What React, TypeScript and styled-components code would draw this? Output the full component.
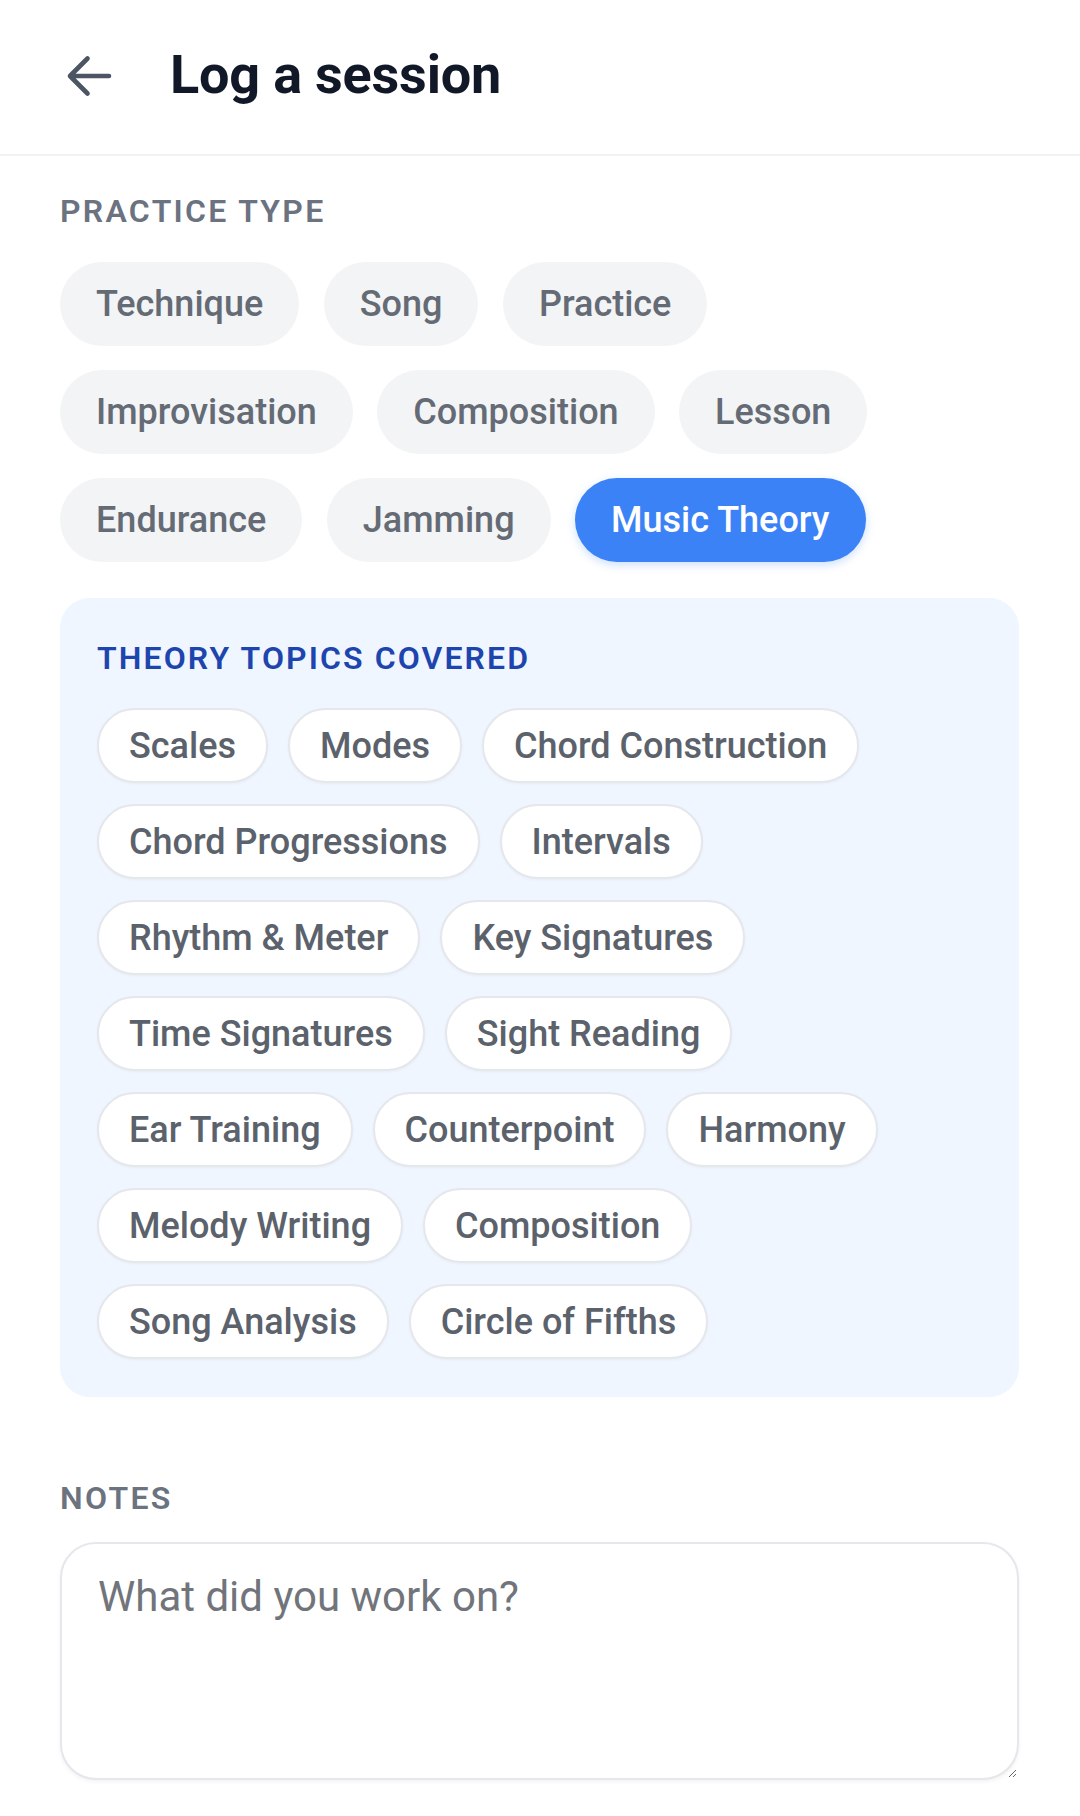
import React from "react"
import styled, { createGlobalStyle } from "styled-components"

const practiceTypes = [
  "Technique",
  "Song",
  "Practice",
  "Improvisation",
  "Composition",
  "Lesson",
  "Endurance",
  "Jamming",
  "Music Theory",
]

const theoryTopics = [
  "Scales",
  "Modes",
  "Chord Construction",
  "Chord Progressions",
  "Intervals",
  "Rhythm & Meter",
  "Key Signatures",
  "Time Signatures",
  "Sight Reading",
  "Ear Training",
  "Counterpoint",
  "Harmony",
  "Melody Writing",
  "Composition",
  "Song Analysis",
  "Circle of Fifths",
]

const GlobalStyle = createGlobalStyle`
  body {
    margin: 0;
    background: #ffffff;
    font-family: Roboto, "Noto Sans", "Liberation Sans", sans-serif;
  }
  * {
    box-sizing: border-box;
  }
`

const App: React.FC = () => {
  return (
    <PageStyled>
      <GlobalStyle />
      <Header>
        <BackButton aria-label="Back">
          <svg width="46" height="44" viewBox="0 0 46 44" fill="none">
            <path
              d="M43 22H4M21.5 4.5L4 22L21.5 39.5"
              stroke="#4b5563"
              strokeWidth="4.6"
              strokeLinecap="round"
              strokeLinejoin="round"
            />
          </svg>
        </BackButton>
        <Title>Log a session</Title>
      </Header>

      <Content>
        <SectionLabel>Practice type</SectionLabel>
        <TypeList>
          {practiceTypes.map(type => (
            <TypeChip key={type} $active={type === "Music Theory"}>
              {type}
            </TypeChip>
          ))}
        </TypeList>

        <TheoryPanel>
          <PanelTitle>Theory topics covered</PanelTitle>
          <TopicList>
            {theoryTopics.map(topic => (
              <TopicChip key={topic}>{topic}</TopicChip>
            ))}
          </TopicList>
        </TheoryPanel>

        <NotesLabel>Notes</NotesLabel>
        <NotesInput placeholder="What did you work on?" />
      </Content>
    </PageStyled>
  )
}

export default App

const PageStyled = styled.div`
  width: 1080px;
  min-height: 1816px;
  background: #ffffff;
`

const Header = styled.header`
  height: 156px;
  display: flex;
  align-items: center;
  padding-left: 66px;
  padding-bottom: 5px;
  border-bottom: 2px solid #f1f2f4;
`

const BackButton = styled.button`
  display: flex;
  align-items: center;
  justify-content: center;
  border: none;
  background: none;
  padding: 0;
  margin-right: 58px;
  margin-top: 3px;
  cursor: pointer;
`

const Title = styled.h1`
  margin: 0;
  font-size: 54px;
  font-weight: 700;
  color: #111827;
  letter-spacing: -0.2px;
`

const Content = styled.main`
  padding: 0 61px 0 60px;
`

const SectionLabel = styled.h2`
  margin: 36px 0 0;
  font-size: 32px;
  line-height: 38px;
  font-weight: 600;
  text-transform: uppercase;
  letter-spacing: 2.3px;
  color: #6b7280;
`

const TypeList = styled.div`
  display: flex;
  flex-wrap: wrap;
  gap: 24px 24.5px;
  margin-top: 32px;
  padding-right: 120px;
`

const TypeChip = styled.button<{ $active?: boolean }>`
  height: 84px;
  padding: 0 36px;
  border: none;
  border-radius: 999px;
  font-family: inherit;
  font-size: 36px;
  font-weight: 500;
  background: ${p => (p.$active ? "#3b82f6" : "#f3f4f6")};
  color: ${p => (p.$active ? "#ffffff" : "#656b75")};
  box-shadow: ${p =>
    p.$active ? "0 3px 8px rgba(59, 130, 246, 0.25)" : "none"};
`

const TheoryPanel = styled.section`
  margin-top: 36px;
  padding: 41px 37px 38px 37px;
  border-radius: 30px;
  background: #eff6ff;
`

const PanelTitle = styled.h3`
  margin: 0;
  font-size: 32px;
  line-height: 38px;
  font-weight: 600;
  text-transform: uppercase;
  letter-spacing: 2.1px;
  color: #1e45ad;
`

const TopicList = styled.div`
  display: flex;
  flex-wrap: wrap;
  gap: 21px 20px;
  margin-top: 31px;
  padding-right: 60px;
`

const TopicChip = styled.button`
  height: 75px;
  padding: 0 30px;
  border: 2px solid #e5e7eb;
  border-radius: 999px;
  background: #ffffff;
  font-family: inherit;
  font-size: 36px;
  font-weight: 500;
  color: #5b626c;
  box-shadow: 0 1px 3px rgba(0, 0, 0, 0.04);
`

const NotesLabel = styled.h2`
  margin: 82px 0 0;
  font-size: 32px;
  line-height: 38px;
  font-weight: 600;
  text-transform: uppercase;
  letter-spacing: 2.3px;
  color: #6b7280;
`

const NotesInput = styled.textarea`
  display: block;
  width: 100%;
  height: 238px;
  margin-top: 25px;
  padding: 25px 36px;
  border: 2px solid #e5e7eb;
  border-radius: 36px;
  background: #ffffff;
  font-family: inherit;
  font-size: 42px;
  line-height: 56px;
  color: #111827;
  outline: none;
  box-shadow: 0 2px 4px rgba(0, 0, 0, 0.05);

  &::placeholder {
    color: #71757b;
  }
`
